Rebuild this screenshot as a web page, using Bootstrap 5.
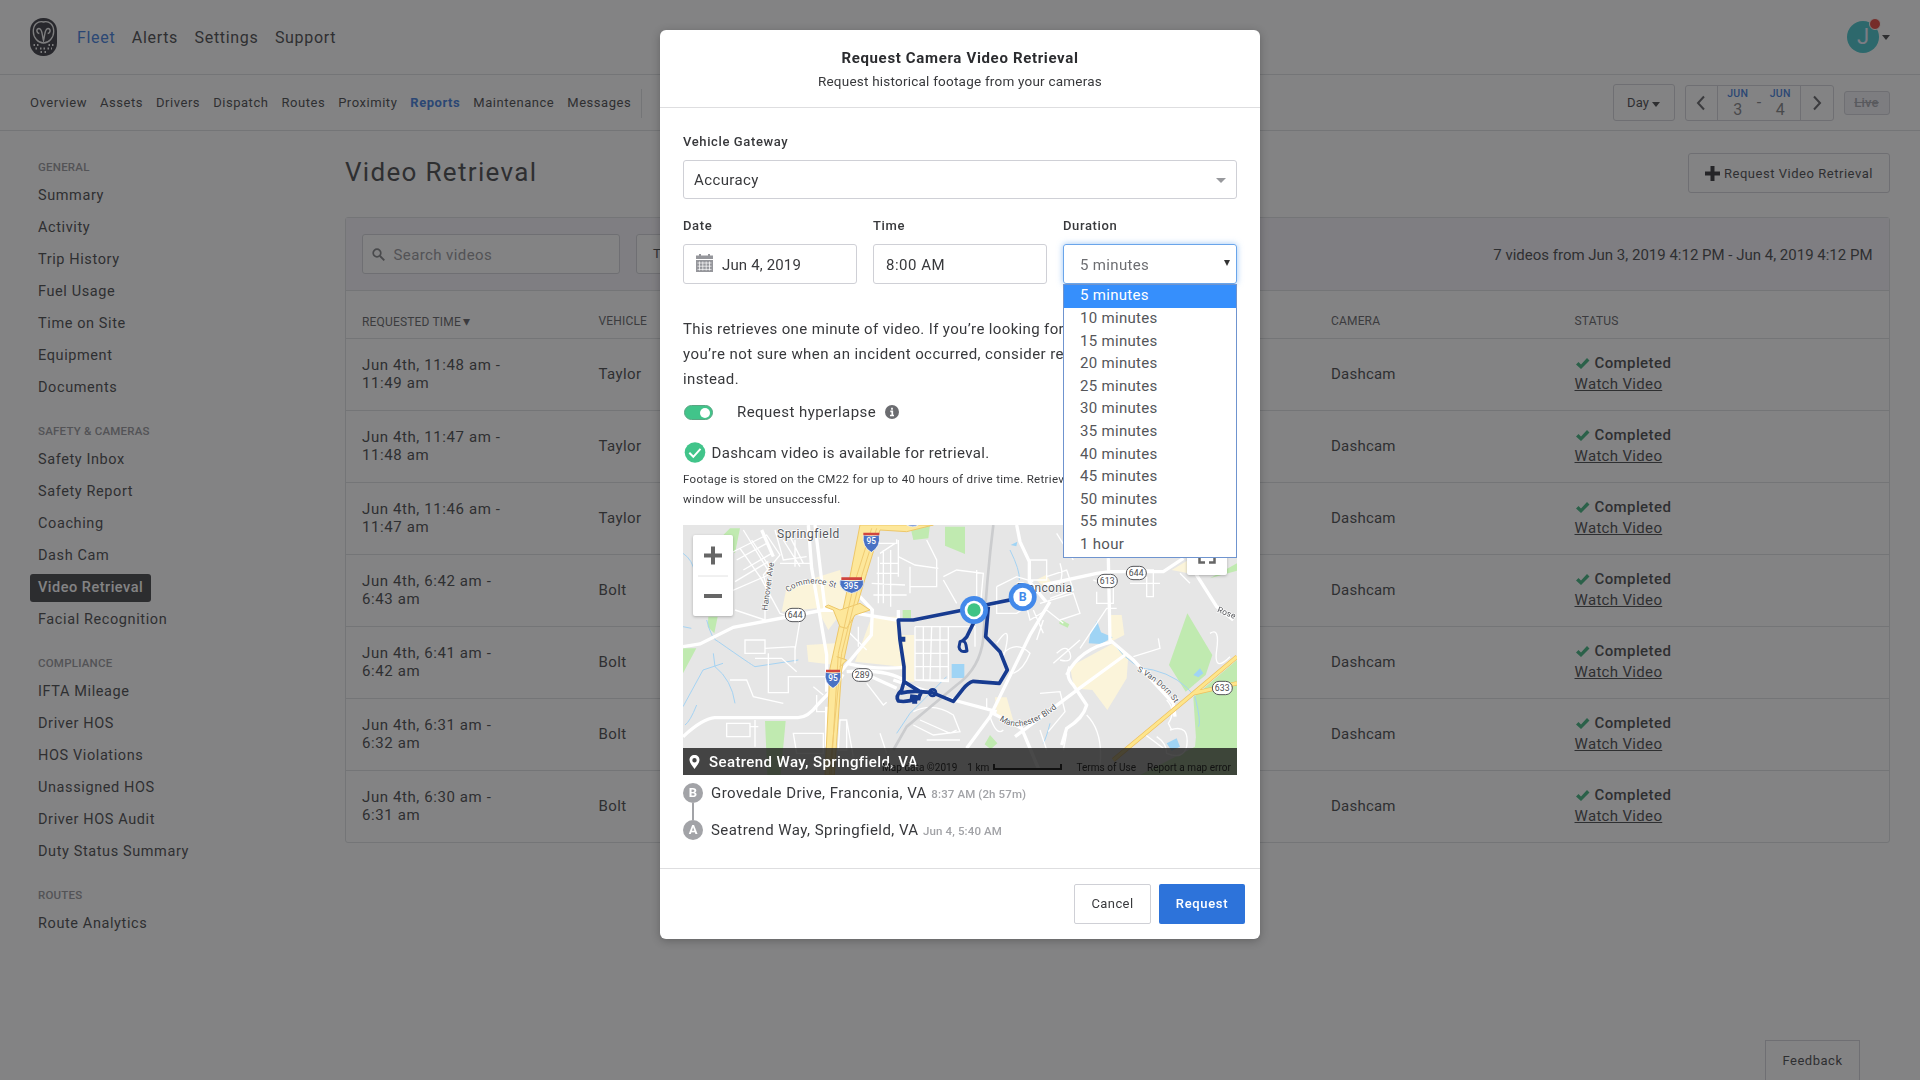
<!DOCTYPE html>
<html lang="en">
<head>
<meta charset="utf-8">
<meta name="viewport" content="width=device-width, initial-scale=1">
<title>Video Retrieval</title>
<link rel="stylesheet" href="https://cdn.jsdelivr.net/npm/bootstrap@5.3.0/dist/css/bootstrap.min.css">
<style>
:root{--ink:#38393c;--line:#dcdde1;--edge:#cfd0d6;--brand:#2f73da;--ok:#41c48a}
html,body{height:100%;overflow:hidden}
body{font-family:Roboto,"Liberation Sans",sans-serif;font-size:15px;line-height:18px;letter-spacing:.4px;color:var(--ink);background:#fff}
svg{display:block;flex:none}
a{color:inherit;text-decoration:none}
.topbar{height:75px;border-bottom:1px solid var(--line);padding:0 30px;font-size:16px;letter-spacing:.68px}
.topbar nav{gap:16.5px;margin-left:20px;padding-top:2px}
.subbar{height:56px;border-bottom:1px solid var(--line);padding:0 30.5px 0 30px;font-size:13px}
.subbar nav{gap:13px;letter-spacing:.54px;padding-top:1px}
.subbar .pipe{width:1px;height:29px;background:var(--line);margin-left:-3px}
.active-link{color:var(--brand)}
.avatar{width:32px;height:32px;border-radius:50%;background:#35c0c6;color:#eef;font-size:22px;letter-spacing:0}
.alert-dot{position:absolute;width:12px;height:12px;border-radius:50%;background:#e0352b;border:1px solid #fff;right:-2px;top:-3px}
.caret-down{width:0;height:0;border:4px solid transparent;border-top:5px solid currentColor;border-bottom:0}
.outbox{border:1px solid var(--edge);border-radius:3px;background:#fff}
.day-btn{width:62px;height:46px;gap:3px;letter-spacing:.1px}
.range-box{width:149px;height:45px;margin:0 10px 0 10px}
.range-box>div+div{border-left:1px solid var(--edge)}
.range-mid{width:83px;gap:8.5px;color:#77787c;font-size:16px;letter-spacing:0}
.range-mid b{display:block;font-size:10.5px;line-height:14px;font-weight:500;color:var(--brand);letter-spacing:.3px}
.live-tag{width:46px;height:29px;border:1px solid var(--edge);border-radius:3px;background:#f0f0f6;color:#9d9ea6;font-weight:500;text-decoration:line-through;letter-spacing:.2px}
.side{width:345px;padding:29px 0 0 30px;font-size:14.5px;letter-spacing:.6px}
.side h6{font-size:11.5px;line-height:14px;font-weight:500;color:#8d8e93;letter-spacing:.22px;margin:0 0 8px 8px}
.side a{height:28px;padding:0 8px;margin-bottom:4px;display:flex;align-items:center;width:max-content;border-radius:3px}
.side section{margin-bottom:22px}
.side a.picked{background:#333437;color:#fff;font-weight:500;letter-spacing:.5px}
.main{flex:1;padding:22px 30.5px 0 0}
.main h1{font-size:26px;line-height:38px;font-weight:400;letter-spacing:1.32px;margin:0 0 2px}
.req-btn{height:40px;padding:0 15.5px;font-size:13px;letter-spacing:.53px;gap:4px}
.panel{border:1px solid var(--line);border-radius:3px;margin-top:24px}
.tools{background:#f5f4fa;height:73px;border-bottom:1px solid var(--line);padding:0 16px 0 16px}
.search{width:258px;height:40px;color:#8d8e93;padding-left:9px;gap:8.5px}
.filter-btn{width:80px;height:40px;padding-left:16px;margin-left:16px;font-size:13px}
.grid-row{height:72px;border-bottom:1px solid var(--line);padding:0 0 2px 16px}
.grid-row:last-child{border-bottom:0;height:71px}
.grid-head{height:48px;font-size:12px;letter-spacing:.17px;padding-top:15px;color:#55565a}
.c1{width:236.5px}.c2{width:732.5px}.c3{width:243.5px}
.feedback{position:fixed;right:60px;top:1040px;width:95px;height:42px;font-size:13px;letter-spacing:.5px;border-radius:0}
.modal-backdrop{background:rgba(40,40,42,.576);opacity:1}
.modal-dialog{max-width:600px;margin:30px auto}
.modal-content{border:0;border-radius:6px;height:909px;color:var(--ink);box-shadow:0 2px 8px rgba(0,0,0,.25)}
.m-head{height:78px;border-bottom:1px solid #dedee0;padding-top:18px;text-align:center}
.m-head h5{font-size:15px;line-height:20px;font-weight:700;letter-spacing:.66px;margin:0 0 4px;color:#2b2c2f}
.m-head p{font-size:13.5px;letter-spacing:.22px;margin:0}
.m-body{padding:25px 23px 0;height:760px}
.m-body label{font-size:13px;font-weight:500;line-height:18px;letter-spacing:.62px;margin-bottom:9px}
.ctl{border:1px solid var(--edge);border-radius:3px;height:40px;width:100%;padding-top:2px}
.ctl.big{height:39px;padding:1px 10px 0}
.ctl.focus{border-color:#6aa5ea;box-shadow:0 0 6px rgba(90,160,240,.6);color:#6d6e72}
.options{position:absolute;left:0;top:40px;width:100%;height:274px;border:1px solid #6f94cf;background:#fff;z-index:5;color:#55565a;letter-spacing:.3px}
.options div{height:22.6px;line-height:20px;padding-left:16px}
.options div:first-child{background:#368ffc;color:#fff;height:23px}
.para{line-height:25px;letter-spacing:.36px;white-space:nowrap;margin:33px 0 0;overflow:hidden}
.toggle{width:29px;height:15px;border-radius:8px;background:var(--ok);padding:2px;border:1px solid #5aa583}
.toggle i{display:block;width:10px;height:10px;border-radius:50%;background:#fff;margin-left:auto}
.note{font-size:11.5px;line-height:19.6px;letter-spacing:.32px;white-space:nowrap;margin:7px 0 16px;overflow:hidden}
.map{position:relative;height:250px;overflow:hidden}
.map-ctl{position:absolute;background:#fff;border-radius:2px;box-shadow:0 1px 3px rgba(0,0,0,.25)}
.place{position:absolute;left:0;right:0;bottom:0;height:27px;background:rgba(28,28,28,.8);color:#fff;font-weight:500;padding-left:5px;gap:8px}
.credits{position:absolute;right:6px;bottom:0;height:14px;font-size:10px;line-height:14px;letter-spacing:.03px;color:#111}
.scale-bar{width:69px;height:6px;border:2px solid #111;border-top:0;margin:3px 14px 0 4px}
.stop{letter-spacing:.45px}
.stop b{width:20px;height:20px;border-radius:50%;background:#a2a3a7;color:#fff;font-size:13px;font-weight:700;letter-spacing:0;margin-right:8px}
.stop small{font-size:11.5px;font-weight:500;color:#a2a3a7;letter-spacing:.12px;margin:1px 0 0 4.5px}
.stem{width:2px;height:17px;background:#a2a3a7;margin-left:9px}
.m-foot{border-top:1px solid #dedee0;height:71px;padding:0 15px 0 0;gap:8px;font-size:13px}
.m-foot button{height:40px;font-size:13px;border-radius:2px;padding:0;letter-spacing:.4px}
.m-foot .no{width:77px;border:1px solid var(--edge);color:var(--ink);background:#fff}
.m-foot .yes{width:86px;background:#2d73da;color:#fff;font-weight:500;border:0;letter-spacing:.65px}
</style>
</head>
<body class="d-flex flex-column">
<header class="topbar d-flex align-items-center flex-shrink-0">
  <svg width="27" height="38" viewBox="0 0 27 38"><rect width="27" height="38" rx="13" fill="#2a2a32"/><path d="M13.500 4C8 2.600 3.300 6.500 3.300 13.500c0 6 4.700 11.500 10.200 11.500s10.200-5.500 10.200-11.500C23.700 6.500 19 2.600 13.500 4Z" fill="none" stroke="#f4f4f4" stroke-width="1.300"/><path d="M9.300 15.500c-3-.500-3.300-5-.300-5 3.500 0 3 7 4.500 12 1.500-5 1-12 4.500-12 3 0 2.700 4.500-.300 5" fill="none" stroke="#f4f4f4" stroke-width="1.400"/><path d="M3.500 27h1.500m2 0h1.500m10 0h1.500m2 0h1.500M5.500 30.500H7m3 0h1.500m2 0h1.500m2.500 0H19m2 0h1M10.500 34H12m2.500 0H16" stroke="#f4f4f4" stroke-width="1.800"/></svg>
  <nav class="d-flex"><a class="active-link" href="#">Fleet</a><a href="#">Alerts</a><a href="#">Settings</a><a href="#">Support</a></nav>
  <div class="ms-auto d-flex align-items-center"><div class="avatar d-flex align-items-center justify-content-center position-relative">J<span class="alert-dot"></span></div><i class="caret-down" style="margin-left:3px"></i></div>
</header>
<div class="subbar d-flex align-items-center flex-shrink-0">
  <nav class="d-flex align-items-center"><a href="#">Overview</a><a href="#">Assets</a><a href="#">Drivers</a><a href="#">Dispatch</a><a href="#">Routes</a><a href="#">Proximity</a><a class="active-link fw-bold" href="#">Reports</a><a href="#">Maintenance</a><a href="#">Messages</a><i class="pipe"></i></nav>
  <div class="ms-auto d-flex align-items-center">
    <div class="outbox day-btn d-flex align-items-center justify-content-center" style="height:37px">Day <i class="caret-down mt-1"></i></div>
    <div class="outbox range-box d-flex align-items-stretch" style="height:36px">
      <div class="d-flex align-items-center justify-content-center" style="width:32px"><svg width="10" height="16" viewBox="0 0 10 16"><path d="M8 1.500 2 8l6 6.500" fill="none" stroke="#55565a" stroke-width="2"/></svg></div>
      <div class="range-mid d-flex align-items-center justify-content-center text-center"><span><b>JUN</b>3</span><span>-</span><span><b>JUN</b>4</span></div>
      <div class="d-flex align-items-center justify-content-center" style="width:33px"><svg width="10" height="16" viewBox="0 0 10 16"><path d="M2 1.500 8 8l-6 6.500" fill="none" stroke="#55565a" stroke-width="2"/></svg></div>
    </div>
    <div class="live-tag d-flex align-items-center justify-content-center" style="height:24px">Live</div>
  </div>
</div>
<div class="d-flex flex-grow-1">
  <aside class="side flex-shrink-0">
    <section><h6>GENERAL</h6><a href="#">Summary</a><a href="#">Activity</a><a href="#">Trip History</a><a href="#">Fuel Usage</a><a href="#">Time on Site</a><a href="#">Equipment</a><a href="#">Documents</a></section>
    <section><h6>SAFETY &amp; CAMERAS</h6><a href="#">Safety Inbox</a><a href="#">Safety Report</a><a href="#">Coaching</a><a href="#">Dash Cam</a><a class="picked" href="#">Video Retrieval</a><a href="#">Facial Recognition</a></section>
    <section><h6>COMPLIANCE</h6><a href="#">IFTA Mileage</a><a href="#">Driver HOS</a><a href="#">HOS Violations</a><a href="#">Unassigned HOS</a><a href="#">Driver HOS Audit</a><a href="#">Duty Status Summary</a></section>
    <section><h6>ROUTES</h6><a href="#">Route Analytics</a></section>
  </aside>
  <main class="main">
    <div class="d-flex justify-content-between align-items-center">
      <h1>Video Retrieval</h1>
      <div class="outbox req-btn d-flex align-items-center"><svg width="15" height="15" viewBox="0 0 15 15"><path d="M5.500 0h4v5.500H15v4H9.500V15h-4V9.500H0v-4h5.500Z" fill="#222327"/></svg><span style="padding-top:1px">Request Video Retrieval</span></div>
    </div>
    <div class="panel">
      <div class="tools d-flex align-items-center">
        <div class="outbox search d-flex align-items-center"><svg width="13" height="13" viewBox="0 0 13 13"><circle cx="5" cy="5" r="3.800" fill="none" stroke="#77787c" stroke-width="1.700"/><path d="m8 8 4.300 4.300" stroke="#77787c" stroke-width="1.900"/></svg><span style="padding-top:1px">Search videos</span></div>
        <div class="outbox filter-btn d-flex align-items-center">T</div>
        <div class="ms-auto" style="letter-spacing:0;padding-top:2px">7 videos from Jun 3, 2019 4:12 PM - Jun 4, 2019 4:12 PM</div>
      </div>
      <div id="rows">
        <div class="grid-row grid-head d-flex align-items-center"><div class="c1">REQUESTED TIME <span style="font-size:14px;margin-left:-1px">▾</span></div><div class="c2">VEHICLE</div><div class="c3">CAMERA</div><div>STATUS</div></div>
      </div>
    </div>
  </main>
</div>
<div class="outbox feedback d-flex justify-content-center pt-2"><span style="padding-top:3px">Feedback</span></div>

<div class="modal-backdrop"></div>
<div class="modal d-block" tabindex="-1">
  <div class="modal-dialog">
    <div class="modal-content">
      <div class="m-head"><h5>Request Camera Video Retrieval</h5><p>Request historical footage from your cameras</p></div>
      <div class="m-body">
        <label class="d-block">Vehicle Gateway</label>
        <div class="ctl big d-flex align-items-center justify-content-between">Accuracy<i class="caret-down" style="color:#98999d;border-width:5px 5px 0"></i></div>
        <div class="d-flex" style="gap:16px;margin-top:18px">
          <div style="flex:1"><label class="d-block">Date</label><div class="ctl d-flex align-items-center" style="padding-left:12px;gap:9px;letter-spacing:.15px"><svg width="17" height="18" viewBox="0 0 17 18" style="margin-top:-4px"><path d="M0 1.500h3V0h2v1.500h7V0h2v1.500h3V5H0Z" fill="#95969b"/><path d="M0 6h17v12H0Z" fill="#95969b"/><path d="M1.500 9h14M1.500 12.200h14M1.500 15.400h14M3.500 7.500v9M6.800 7.500v9M10.200 7.500v9M13.500 7.500v9" stroke="#fff" stroke-width=".7"/></svg>Jun 4, 2019</div></div>
          <div style="flex:1"><label class="d-block">Time</label><div class="ctl d-flex align-items-center" style="padding-left:12px;letter-spacing:.5px">8:00 AM</div></div>
          <div style="flex:1"><label class="d-block">Duration</label>
            <div class="position-relative"><div class="ctl focus d-flex align-items-center justify-content-between" style="padding:2px 5px 0 16px;letter-spacing:.34px">5 minutes<svg width="8" height="8" viewBox="0 0 8 8" style="margin-top:-4px"><path d="M1 1h6L4 7Z" fill="#333"/></svg></div>
              <div class="options"><div>5 minutes</div><div>10 minutes</div><div>15 minutes</div><div>20 minutes</div><div>25 minutes</div><div>30 minutes</div><div>35 minutes</div><div>40 minutes</div><div>45 minutes</div><div>50 minutes</div><div>55 minutes</div><div>1 hour</div></div>
            </div></div>
        </div>
        <p class="para">This retrieves one minute of video. If you’re looking for<br><span style="letter-spacing:.43px">you’re not sure when an incident occurred, consider re</span><br>instead.</p>
        <div class="d-flex align-items-center" style="height:18px;margin-top:11px"><div class="toggle" style="margin-left:.5px"><i></i></div><span style="margin:0 9px 0 24.5px;letter-spacing:.45px">Request hyperlapse</span><svg width="14" height="14" viewBox="0 0 14 14"><circle cx="7" cy="7" r="7" fill="#6b6c70"/><path d="M7 2.800v2M5.300 6.300h2v4M5 10.500h4" stroke="#fff" stroke-width="1.700" fill="none"/></svg></div>
        <div class="d-flex align-items-center" style="height:22px;margin-top:20px"><svg width="22" height="21" viewBox="0 0 22 21" style="margin-left:1px"><circle cx="11" cy="10.500" r="10.300" fill="#41c48a"/><path d="m5.300 10.800 4 4 7.200-8" fill="none" stroke="#fff" stroke-width="2"/></svg><span style="margin-left:5.500px;letter-spacing:.34px;padding-top:1px">Dashcam video is available for retrieval.</span></div>
        <p class="note">Footage is stored on the CM22 for up to 40 hours of drive time. Retriev<br>window will be unsuccessful.</p>
        <div class="map">
          <svg width="554" height="250" viewBox="9 15 1662 750" preserveAspectRatio="none" font-family="Roboto,sans-serif" fill="none">
            <rect x="9" y="15" width="1662" height="750" fill="#e6e6e6"/>
            <!-- parks and commercial zones -->
            <g fill="#c0eab0"><path d="M150 25h30l-15 75-50-40ZM85 290h28l-10 50-20-20ZM9 385h40l-40 75ZM255 603h62l-15 162h-40ZM690 15h60l-5 40-45 5ZM795 20h60v82l-60-25ZM668 270h25v24h-25ZM1522 280l75 125-20 60-60 50-50-80ZM1380 765l165-85 15-160 111-20v265ZM1540 532 1671 420v345H1555ZM930 645l22 25-20 18-18-15ZM1590 175l81-45v22ZM1140 298l28 15-5 10-25-12Z"/></g>
            <g fill="#fbf4da"><path d="M305 275 320 200 480 150 505 250 445 330 410 265ZM380 375l85-5v65l-80-10ZM575 290h80l10 150-140-15ZM665 345h38v140h-28l-12-60ZM945 532h35l20 70-50-20ZM1170 440l130-70 45 35-5 70-58 95-45-60-55-5ZM1290 285h35l8 60-40 20ZM1068 180l30-15 15 20-20 15ZM1475 150l50-30v40Z"/></g>
            <g fill="#9fd4f5"><path d="M815 432h38v42h-38ZM1226 370l5-30 20-38 12 35 35 15-35 20ZM1460 670l30-15 10 25-25 12ZM1540 465l20-20 10 15-15 12ZM992 75l20-10-3 14Z"/></g>
            <g stroke="#a5d3f3" stroke-width="3"><path d="M9 100q30 20 35 60M9 320l25 5M80 300q15 60 35 65 100 70 110 75l130-20M9 560l60-110 60-20M50 555q-20 50-35 60M990 90q30 60 28 90M1300 370q60 80 120 80 80 20 125 80 20 80 10 90M800 470l-110 110-40 60M100 400l5 40q50 40 60 110M1110 610q-10 40-20 60"/></g>
            <!-- local streets -->
            <g stroke="#fff" stroke-width="4">
              <path d="M140 105l120-60 40 60-50 60 20 70M180 85l70 100M215 60l60 90M190 30l80 130M170 120l90-50M190 150l85-50M165 185l100-60M150 215l115-50M165 270l90 30v-60M240 170l60 110 60 20M285 30l25 90 70-10M300 130h90M310 60l50 80M330 50l40 80M345 60v80M360 300l-15 90M195 360h60v40h-60ZM255 385l90-5v50M265 400v118h60V470h115M225 415h80l45 40M150 480h50l20 50 90 20M140 610v40h70v-40ZM225 600v80M210 620h25M400 500l30 25M410 525v50h30M340 640h90v60h-80ZM480 600h20v90h-25ZM500 600l20 110M560 490l50 65 10-8M535 320v60M500 330l60 60"/>
              <path d="M580 70h70v-12M600 100l45-30M595 110v140M610 90v160M632 90v170M575 190l100 5M580 225h100M590 160h65M600 130h55M655 60v110M690 140v80M655 110l50 25 70 10M740 60l30 60v80h-80M790 170l40-20 80 10-10 110M790 180l40 70M705 320v160l100 5V320M705 320h180v60M730 320v160M755 320l-5 160M780 320v160M705 360h100M705 400h100M705 440h100M705 480h100M890 150v120M950 200l60-30 50 15M950 200v80h60l30-20 10 40 50-30 50 40M1050 120h50v60h-50M1100 170l60-20 20 60-70 25M1080 250l100-30 20 60-60 20M1090 300l-20 60M1060 270l30 70M950 370q40-60 30 0t-20 30M970 400q40-40 80 0-20 50-50 60M920 535v30M930 590q20 60 40 40M1080 520l60-5 15 60-50 60M1250 215v35h50v-50M1360 150h60v80h-20v-60M1310 265h-30l-40 60-40 60M1120 430l80-70M1130 400q30-30 40 0t-30 20M1360 410l80-25-5-30M1080 630l20 60M1220 585q50 50 40 150M1160 640l-10 50M1390 640l60 45M1470 630q60-20 50 50-10 40-60 20 0-30-30-50M1460 540q30 30 5 70l10 20M1590 340q30-20 20 50t40 20M1130 40l50 80M1140 130q20 60-30 90M700 575q60-30 120 10l20 50-80 10-60-30M720 600l90 40 20-10M740 660h100M600 640l20 60M1240 180l60 20M1285 60v90M1350 190h90M1500 160l30 30"/>
            </g>
            <!-- arterial roads -->
            <g stroke="#fff" stroke-width="10"><path d="M9 380 60 372 160 322 430 270 480 272M9 650q60-55 95-57h250q30 0 60-40 60-60 75-90M480 272l170 28M385 15l10 130 45 260v110M405 15l30 250M440 560v120M535 225l42 45-3 75-100 120M655 300v-30M500 430q80 20 175 12M500 455q120-10 180 30"/><path d="M530 450l120 55M640 480l180 60 130 35M1110 245l-60 100-120 245-70 95M1285 115l5 245 70 60 120 130 5 40M1170 440q-15 30 10 55l40 60q-10 40-60 70l-15 50M1300 365q-100 20-140 100M1335 405l-130 95-200 150M930 575l95 50 50 120M1090 195l160-35 40-5h160l60-40M1540 150l70 110 50 40M1010 15l10 50 28 60v60l50 60M245 30l35 80"/></g>
            <path d="M940 15q-20 160-30 340-10 90-80 140L680 620l-40 70" stroke="#cbccce" stroke-width="8"/>
            <path d="M1671 410 1540 520 1300 720M1671 490 1540 520" stroke="#efbf5c" stroke-width="13"/><path d="M1671 410 1540 520 1300 720M1671 490 1540 520" stroke="#fde58c" stroke-width="9"/>
            <!-- interstates -->
            <g fill="#fde79a" stroke="#edc769" stroke-width="3"><path d="M540 15h220l-80 20-80-5-40 130-45 150-30 140-22 315h-28l15-320 55-250Z"/><path d="M445 255l35 15 60-20 30 20-45 15-25 40-20-5-20-50-25-10ZM470 410l30 10-20 20"/></g>
            <path d="M575 25 520 200 475 400 453 765M590 25 535 200 485 400 448 765" stroke="#f0cb72" stroke-width="3"/>
            <!-- vehicle route -->
            <g stroke="#173b90" stroke-width="11" stroke-linejoin="round"><path d="M1028 232 930 252 880 264 700 300H655l5 60 12 80v45l-7 25q-20 18-10 33 25 5 60-8l10-20q-35-3-65 5M925 260l-8 90 43 45 22 55-24 40-78-6q-15 4-30 22l-30 38-63-26-37-3-48-30M882 306l-22 45-12 12"/><path d="M840 365q15-6 18 10l3 18q-22 6-24-12Z" stroke-width="9"/><circle cx="758" cy="518" r="10" stroke-width="8"/><path d="M660 358h16M690 530l32 4M704 525v26" stroke-width="15"/></g>
            <!-- road shields -->
            <g text-anchor="middle" font-size="25" font-weight="500" fill="#fff">
              <g fill="#4a72c4" stroke="#fff" stroke-width="2"><path d="M550 45q24 6 48 0 5 35-24 52-29-17-24-52Z"/><path d="M480 180q35 6 70 0 6 30-35 40-41-10-35-40ZM436 457q23 6 46 0 5 32-23 48-28-16-23-48ZM680 15h35q-15 10-35 0Z"/></g>
              <path d="M550 42h48M484 176h62M438 453h42" stroke="#d0443e" stroke-width="8"/>
              <text x="574" y="73">95</text><text x="513" y="207">395</text><text x="459" y="483">95</text></g>
            <g fill="#fff" stroke="#55565a" stroke-width="3"><rect x="316" y="265" width="60" height="40" rx="20"/><rect x="517" y="446" width="60" height="38" rx="19"/><rect x="1252" y="163" width="60" height="40" rx="20"/><rect x="1339" y="139" width="60" height="40" rx="20"/><rect x="1597" y="484" width="60" height="40" rx="20"/></g>
            <g fill="#4c4d50" font-size="26" text-anchor="middle" stroke="none"><text x="346" y="295">644</text><text x="547" y="475">289</text><text x="1282" y="193">613</text><text x="1369" y="169">644</text><text x="1627" y="514">633</text></g>
            <path id="commerce" d="M325 218q50-50 160-8"/><path id="manchester" d="M958 600q70 55 190-50"/><path id="vandorn" d="M1370 452q90 50 125 115"/>
            <g fill="#55565a" stroke="#fff" stroke-width="4" paint-order="stroke" font-size="25"><text x="291" y="55" font-size="36" letter-spacing="1.500">Springfield</text><text x="1010" y="216" font-size="36" letter-spacing="1">Franconia</text>
              <text transform="translate(262 272) rotate(-82)" letter-spacing=".5">Hanover Ave</text>
              <text font-size="24"><textPath href="#commerce">Commerce St</textPath></text>
              <text><textPath href="#manchester">Manchester Blvd</textPath></text>
              <text font-size="24"><textPath href="#vandorn">S Van Dorn St</textPath></text>
              <text transform="translate(1610 275) rotate(22)">Rose</text></g>
            <circle cx="1028" cy="231" r="42" fill="#4389ea"/><circle cx="1028" cy="231" r="28" fill="#fff"/><text x="1028" y="244" text-anchor="middle" font-size="37" font-weight="700" fill="#4389ea">B</text>
            <circle cx="882" cy="270" r="42" fill="#4389ea"/><circle cx="882" cy="270" r="28" fill="#fff"/><circle cx="882" cy="270" r="20" fill="#3fc385"/>
          </svg>
          <div class="map-ctl" style="left:10px;top:10px;width:40px;height:81px"><svg width="40" height="81" viewBox="0 0 40 81"><path d="M11 20.500h18M20 11.500v18M11 61h18" stroke="#666" stroke-width="4"/><path d="M5 41h30" stroke="#e2e2e2"/></svg></div>
          <div class="map-ctl" style="left:504px;top:10px;width:40px;height:40px"><svg width="40" height="40" viewBox="0 0 40 40"><path d="M12.500 17v-5H18M22 12h5.500v5M12.500 22v5.500H18M22 27.500h5.500V22" stroke="#666" stroke-width="2.500" fill="none"/></svg></div>
          <div class="place d-flex align-items-center"><svg width="13" height="16" viewBox="0 0 13 16"><path d="M6.500 1C3.500 1 1.500 3 1.500 6c0 3 3 6 5 9 2-3 5-6 5-9 0-3-2-5-5-5Zm0 3a2.200 2.200 0 1 1 0 4.400 2.200 2.200 0 0 1 0-4.400Z" fill="#fff" fill-rule="evenodd"/></svg>Seatrend Way, Springfield, VA</div>
          <div class="credits d-flex"><span style="margin-right:10px">Map data ©2019</span><span>1 km</span><i class="scale-bar"></i><span style="margin-right:11px">Terms of Use</span><span>Report a map error</span></div>
        </div>
        <div class="stop d-flex align-items-center" style="margin-top:8px"><b class="d-flex align-items-center justify-content-center">B</b>Grovedale Drive, Franconia, VA<small>8:37 AM (2h 57m)</small></div>
        <div class="stem"></div>
        <div class="stop d-flex align-items-center"><b class="d-flex align-items-center justify-content-center">A</b>Seatrend Way, Springfield, VA<small>Jun 4, 5:40 AM</small></div>
      </div>
      <div class="m-foot d-flex align-items-center justify-content-end"><button class="btn no">Cancel</button><button class="btn yes">Request</button></div>
    </div>
  </div>
</div>
<script src="https://cdn.jsdelivr.net/npm/bootstrap@5.3.0/dist/js/bootstrap.bundle.min.js"></script>
<script>
const trips=[["11:48 am","11:49 am","Taylor"],["11:47 am","11:48 am","Taylor"],["11:46 am","11:47 am","Taylor"],["6:42 am","6:43 am","Bolt"],["6:41 am","6:42 am","Bolt"],["6:31 am","6:32 am","Bolt"],["6:30 am","6:31 am","Bolt"]];
document.getElementById("rows").insertAdjacentHTML("beforeend",trips.map(([a,b,v])=>`<div class="grid-row d-flex align-items-center"><div class="c1" style="letter-spacing:.6px">Jun 4th, ${a} -<br>${b}</div><div class="c2">${v}</div><div class="c3" style="letter-spacing:.22px">Dashcam</div><div style="line-height:21px;padding-top:1px"><div class="d-flex align-items-center" style="font-weight:500;gap:5px"><svg width="15" height="13" viewBox="0 0 15 13"><path d="M1 7.500 3.500 5l2.500 2.500L12 1l2.500 2.500L6 12Z" fill="#2fae75"/></svg>Completed</div><a href="#" style="text-decoration:underline;letter-spacing:.33px">Watch Video</a></div></div>`).join(""));
</script>
</body>
</html>
